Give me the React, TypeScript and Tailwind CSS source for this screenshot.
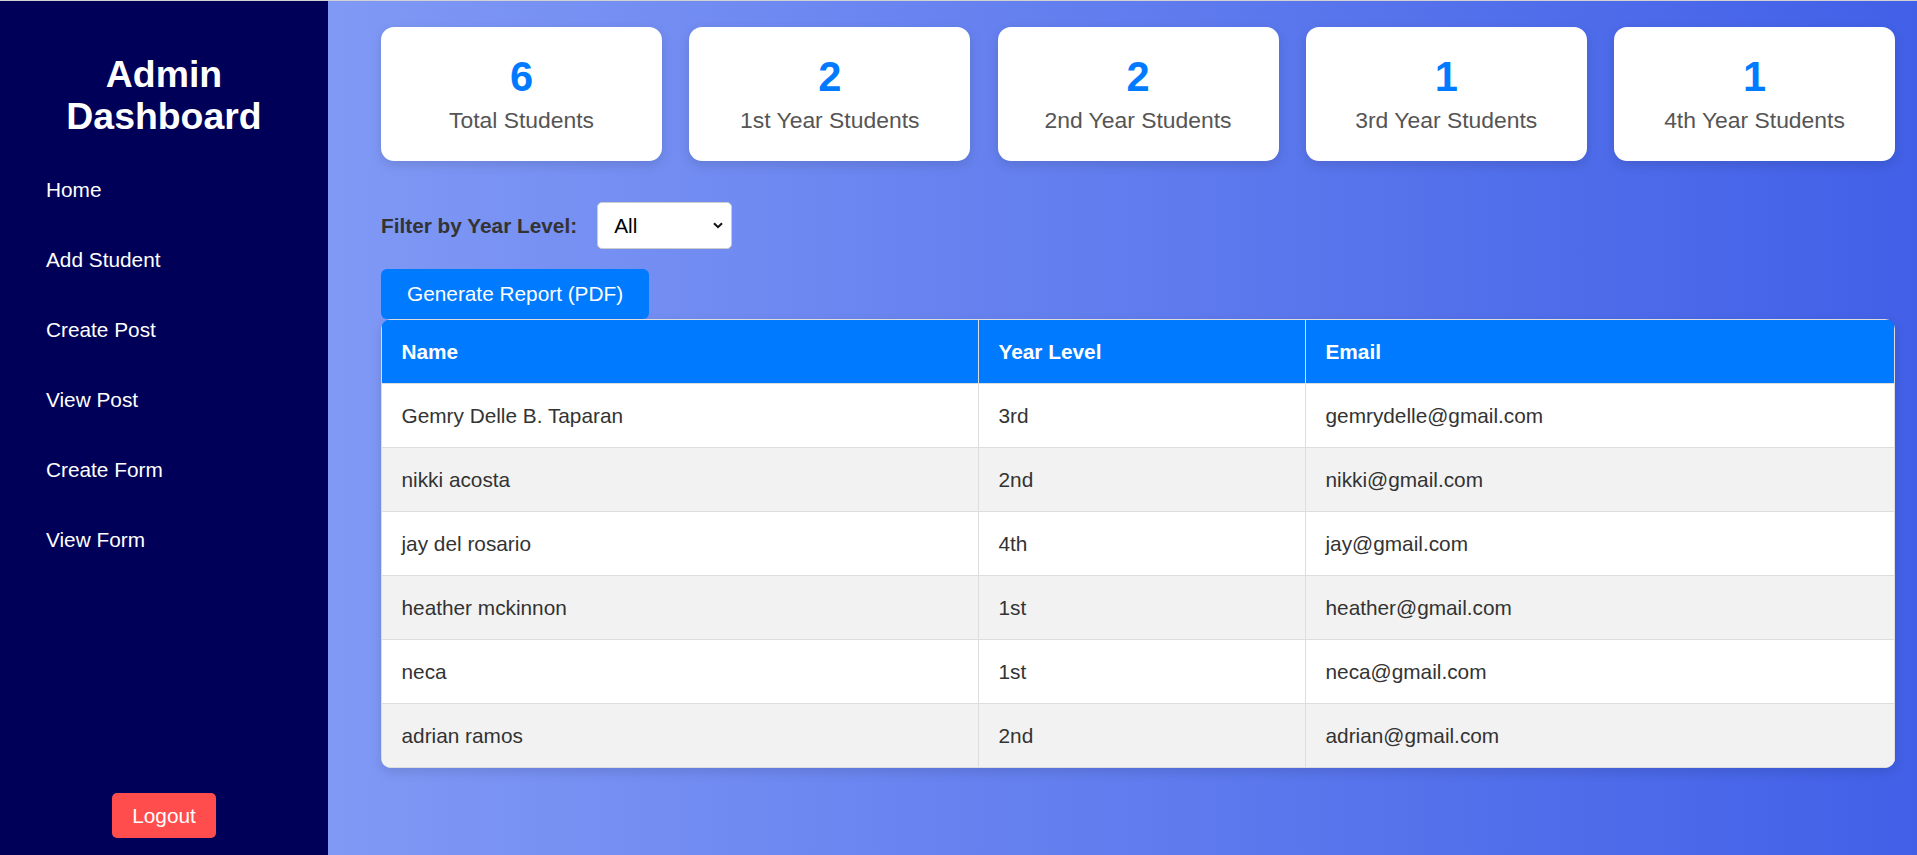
import React from "react";

const navItems = ["Home", "Add Student", "Create Post", "View Post", "Create Form", "View Form"];

const stats = [
  { n: 6, label: "Total Students" },
  { n: 2, label: "1st Year Students" },
  { n: 2, label: "2nd Year Students" },
  { n: 1, label: "3rd Year Students" },
  { n: 1, label: "4th Year Students" },
];

const students = [
  { name: "Gemry Delle B. Taparan", year: "3rd", email: "gemrydelle@gmail.com" },
  { name: "nikki acosta", year: "2nd", email: "nikki@gmail.com" },
  { name: "jay del rosario", year: "4th", email: "jay@gmail.com" },
  { name: "heather mckinnon", year: "1st", email: "heather@gmail.com" },
  { name: "neca", year: "1st", email: "neca@gmail.com" },
  { name: "adrian ramos", year: "2nd", email: "adrian@gmail.com" },
];

export default function App() {
  return (
    <div className="relative flex min-h-[855px] w-full font-['Liberation_Sans',Arial,sans-serif]">
      <div className="absolute left-0 right-0 top-0 h-px bg-[#d2d2d2]" />
      <aside className="flex w-[328px] shrink-0 flex-col bg-[#000058]">
        <h1 className="mt-[53px] text-center text-[37.4px] font-bold leading-[42px] text-white">
          Admin
          <br />
          Dashboard
        </h1>
        <nav className="mt-[17.6px] flex flex-col">
          {navItems.map((item) => (
            <a
              key={item}
              href="#"
              className="block h-[70px] py-[23px] pl-[46px] text-[20.8px] leading-[24px] text-white"
            >
              {item}
            </a>
          ))}
        </nav>
        <div className="mb-[17px] mt-auto flex justify-center">
          <button className="h-[45px] rounded-[5px] bg-[#ff4d4d] px-[20px] text-[20.8px] leading-[24px] text-white">
            Logout
          </button>
        </div>
      </aside>
      <main className="min-h-[855px] flex-1 bg-[linear-gradient(to_right,#8099f5,#4160e7)] pl-[53px] pr-[22px] pt-[27px]">
        <div className="grid grid-cols-5 gap-[27.25px]">
          {stats.map((s) => (
            <div
              key={s.label}
              className="rounded-[13px] bg-white pb-[28px] pt-[26px] text-center shadow-[0_4px_12px_rgba(0,0,0,0.12)]"
            >
              <div className="mb-[6px] text-[41.6px] font-bold leading-[47.8px] text-[#007bff]">{s.n}</div>
              <div className="text-[22.9px] leading-[26.3px] text-[#555]">{s.label}</div>
            </div>
          ))}
        </div>
        <div className="mt-[41px] flex items-center gap-[20px]">
          <label className="text-[20.8px] font-bold leading-[24px] text-[#333]">Filter by Year Level:</label>
          <div className="relative">
            <select className="h-[47px] w-[135px] appearance-none rounded-[5px] border border-[#ccc] bg-white pl-[16px] text-[20.8px] text-black">
              <option>All</option>
              <option>1st</option>
              <option>2nd</option>
              <option>3rd</option>
              <option>4th</option>
            </select>
            <svg
              className="pointer-events-none absolute right-[9px] top-[20px]"
              width="10"
              height="7"
              viewBox="0 0 10 7"
              fill="none"
            >
              <path d="M1 1.2 L5 5.2 L9 1.2" stroke="#111" strokeWidth="2" />
            </svg>
          </div>
        </div>
        <button className="mt-[20px] block h-[50px] rounded-[6px] bg-[#007bff] px-[26px] text-[20.8px] leading-[24px] text-white">
          Generate Report (PDF)
        </button>
        <div className="overflow-hidden rounded-[10px] shadow-[0_4px_12px_rgba(0,0,0,0.12)]">
          <table className="w-full table-fixed border-collapse">
            <colgroup>
              <col className="w-[597px]" />
              <col className="w-[327px]" />
              <col />
            </colgroup>
            <thead>
              <tr className="bg-[#007bff]">
                {["Name", "Year Level", "Email"].map((h) => (
                  <th
                    key={h}
                    className="border border-[#ddd] px-[19.5px] py-[19.5px] text-left text-[20.8px] font-bold leading-[24px] text-white"
                  >
                    {h}
                  </th>
                ))}
              </tr>
            </thead>
            <tbody>
              {students.map((s, i) => (
                <tr key={s.email} className={i % 2 === 1 ? "bg-[#f2f2f2]" : "bg-white"}>
                  <td className="border border-[#ddd] px-[19.5px] py-[19.5px] text-[20.8px] leading-[24px] text-[#333]">{s.name}</td>
                  <td className="border border-[#ddd] px-[19.5px] py-[19.5px] text-[20.8px] leading-[24px] text-[#333]">{s.year}</td>
                  <td className="border border-[#ddd] px-[19.5px] py-[19.5px] text-[20.8px] leading-[24px] text-[#333]">{s.email}</td>
                </tr>
              ))}
            </tbody>
          </table>
        </div>
      </main>
    </div>
  );
}
